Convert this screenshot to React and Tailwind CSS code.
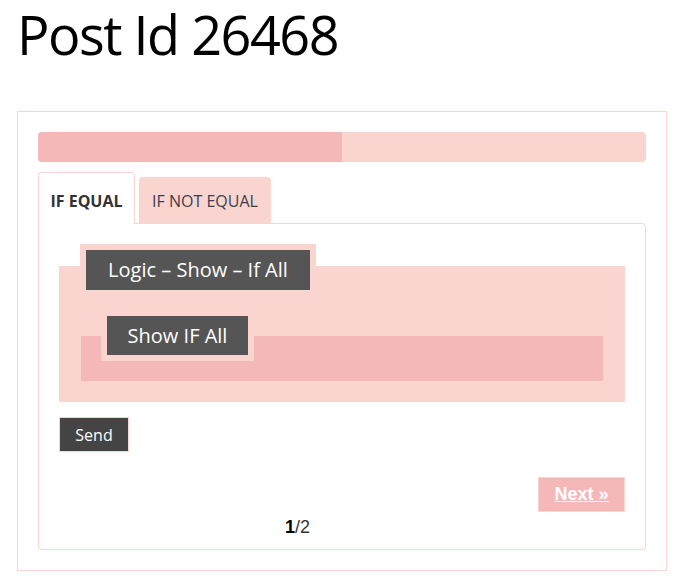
import React from "react";

const Legend = ({ label, width, height }) => (
    <div className="relative z-10 inline-block bg-[#fad4cf] p-[6px]">
        <div
            className={`flex items-center justify-center bg-[#555555] text-white text-[20px] ${width} ${height}`}
        >
            {label}
        </div>
    </div>
);

const App = () => {
    return (
        <div className="min-h-[580px] bg-white px-[17px] pt-px font-['Open_Sans',sans-serif] text-[#333]">
            <h1 className="-mt-[3px] text-[54px] leading-[72px] font-normal text-black tracking-[-1.5px]">Post Id 26468</h1>

            <div className="mt-[41px] w-[650px] border border-[#fad4cf] px-[20px] pt-[20px] pb-[20px]">
                {/* progress */}
                <div className="h-[30px] w-full overflow-hidden rounded-[4px] bg-[#fad4cf]">
                    <div className="h-full w-1/2 bg-[#f5b8b9]"></div>
                </div>

                {/* tabs */}
                <div className="mt-[10px] flex items-end gap-[4px]">
                    <div className="relative z-10 -mb-px w-[97px] rounded-t-[4px] border border-b-0 border-[#fad4cf] bg-white pt-[18px] pb-[13px] text-center text-[16px] leading-[20px] font-bold text-[#333]">
                        IF EQUAL
                    </div>
                    <div className="w-[132px] rounded-t-[4px] bg-[#fad4cf] pt-[14px] pb-[12px] text-center text-[16px] leading-[20px] text-[#3d3d4d]">
                        IF NOT EQUAL
                    </div>
                </div>

                {/* panel */}
                <div className="rounded-tr-[4px] rounded-b-[4px] border border-[#fad4cf] px-[20px] pt-[20px] pb-[10px]">
                    <div className="flex flex-col">
                        <div className="pl-[21px]">
                            <Legend label="Logic – Show – If All" width="w-[224px]" height="h-[40px]" />
                        </div>
                        <div className="-mt-[30px] bg-[#fad4cf] px-[22px] pt-[44px] pb-[21px]">
                            <div className="pl-[20px]">
                                <Legend label="Show IF All" width="w-[141px]" height="h-[39px]" />
                            </div>
                            <div className="-mt-[25px] h-[45px] bg-[#f5b8b9]"></div>
                        </div>
                    </div>

                    <button className="mt-[15px] h-[35px] w-[70px] border border-[#fad4cf] bg-[#444444] text-[16px] text-white">
                        Send
                    </button>

                    <div className="mt-[25px] flex justify-end">
                        <button className="h-[35px] w-[87px] border border-[#fad4cf] bg-[#f5b8b9] font-['Liberation_Sans',Arial,sans-serif] text-[18px] font-bold text-white underline">
                            Next »
                        </button>
                    </div>

                    <div className="mt-[3px] pl-[226px] font-['Liberation_Sans',Arial,sans-serif] text-[18px] leading-[24px] text-[#333]">
                        <b className="text-black">1</b>/2
                    </div>
                </div>
            </div>
        </div>
    );
};

export default App;
